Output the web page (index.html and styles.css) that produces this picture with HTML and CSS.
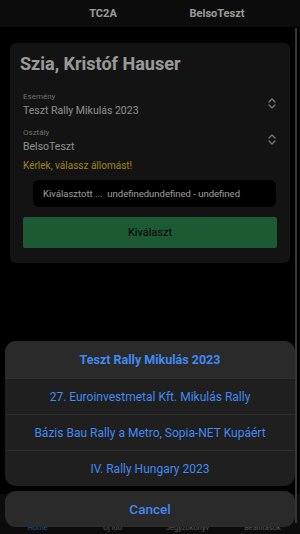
FILE: index.html
```html
<!DOCTYPE html>
<html lang="hu">
<head>
<meta charset="utf-8">
<title>Kiválaszt</title>
<link rel="stylesheet" href="styles.css">
</head>
<body>
<div class="app">
  <header class="topbar">
    <span class="topbar-item">TC2A</span>
    <span class="topbar-item">BelsoTeszt</span>
  </header>
  <main class="content">
    <section class="card">
      <h1 class="greeting">Szia, Kristóf Hauser</h1>
      <div class="field">
        <div class="field-text">
          <span class="field-label">Esemény</span>
          <span class="field-value">Teszt Rally Mikulás 2023</span>
        </div>
        <svg class="chevrons" width="8" height="11" viewBox="0 0 8 11"><path d="M1 4 L4 1 L7 4 M1 7 L4 10 L7 7" fill="none" stroke="currentColor" stroke-width="1.3" stroke-linecap="round" stroke-linejoin="round"/></svg>
      </div>
      <div class="field">
        <div class="field-text">
          <span class="field-label">Osztály</span>
          <span class="field-value">BelsoTeszt</span>
        </div>
        <svg class="chevrons" width="8" height="11" viewBox="0 0 8 11"><path d="M1 4 L4 1 L7 4 M1 7 L4 10 L7 7" fill="none" stroke="currentColor" stroke-width="1.3" stroke-linecap="round" stroke-linejoin="round"/></svg>
      </div>
      <p class="warning">Kérlek, válassz állomást!</p>
      <div class="selected">Kiválasztott ...&nbsp; undefinedundefined - undefined</div>
      <div class="primary" role="button">Kiválaszt</div>
    </section>
  </main>
  <nav class="tabbar">
    <span class="tab tab-active">Home</span>
    <span class="tab">Új idő</span>
    <span class="tab">Jegyzőkönyv</span>
    <span class="tab">Beállítások</span>
  </nav>
  <div class="scroll-indicator"></div>
</div>
<div class="backdrop"></div>
<div class="sheet">
  <div class="sheet-group">
    <div class="sheet-row sheet-title">Teszt Rally Mikulás 2023</div>
    <div class="sheet-row">27. Euroinvestmetal Kft. Mikulás Rally</div>
    <div class="sheet-row">Bázis Bau Rally a Metro, Sopia-NET Kupáért</div>
    <div class="sheet-row">IV. Rally Hungary 2023</div>
  </div>
  <div class="sheet-cancel">Cancel</div>
</div>
</body>
</html>
```
FILE: styles.css
```css
* { box-sizing: border-box; }
html, body {
  margin: 0;
  width: 300px;
  height: 534px;
  overflow: hidden;
  background: #000;
  font-family: Roboto, "Noto Sans", "Liberation Sans", sans-serif;
}
.app {
  position: relative;
  height: 534px;
  display: flex;
  flex-direction: column;
}
.topbar {
  height: 27px;
  background: #151515;
  display: flex;
  align-items: center;
  padding-left: 46px;
}
.topbar-item {
  width: 114px;
  text-align: center;
  color: #fff;
  font-weight: 700;
  font-size: 11px;
}
.content {
  flex: 1;
  padding: 16px 10px 0;
}
.card {
  background: #212121;
  border-radius: 6px;
  padding: 10px 13px 15px;
}
.greeting {
  margin: 0 0 0 -3px;
  font-size: 18px;
  line-height: 22px;
  font-weight: 700;
  color: #fff;
}
.field {
  display: flex;
  align-items: center;
  justify-content: space-between;
  margin-top: 17px;
}
.field + .field { margin-top: 10px; }
.field-text {
  display: flex;
  flex-direction: column;
}
.field-label {
  font-size: 8px;
  line-height: 10px;
  color: #b5b5b5;
}
.field-value {
  margin-top: 2px;
  font-size: 10.5px;
  line-height: 14px;
  color: #e6e6e6;
}
.chevrons {
  color: #c8c8c8;
  margin-right: 1px;
  margin-top: -4px;
}
.warning {
  margin: 5px 0 0;
  font-size: 10px;
  line-height: 14px;
  color: #ffd62e;
}
.selected {
  margin: 7px 1px 0 10px;
  height: 27px;
  background: #000;
  border-radius: 6px;
  display: flex;
  align-items: center;
  padding-left: 10px;
  font-size: 9.5px;
  color: #fff;
  white-space: nowrap;
}
.primary {
  margin-top: 10px;
  height: 31px;
  border-radius: 2px;
  background: #319658;
  color: #000;
  font-size: 11px;
  display: flex;
  align-items: center;
  justify-content: center;
}
.tabbar {
  height: 40px;
  background: #151515;
  display: grid;
  grid-template-columns: repeat(4, 1fr);
  align-items: end;
  padding-bottom: 1px;
}
.tab {
  text-align: center;
  font-size: 7.5px;
  line-height: 10px;
  color: #9a9a9a;
}
.tab-active { color: #4a85f0; }
.scroll-indicator {
  position: absolute;
  right: 3px;
  top: 28px;
  bottom: 11px;
  width: 2px;
  background: #5c5c5c;
}
.backdrop {
  position: absolute;
  inset: 0;
  background: rgba(0, 0, 0, 0.4);
}
.sheet {
  position: absolute;
  left: 5px;
  right: 5px;
  bottom: 7px;
  display: flex;
  flex-direction: column;
  gap: 5px;
}
.sheet-group {
  border-radius: 11px;
  overflow: hidden;
  background: #1f1f1f;
}
.sheet-row {
  height: 36px;
  display: flex;
  align-items: center;
  justify-content: center;
  color: #4189f2;
  font-size: 12px;
  border-top: 1px solid #2e2e2e;
}
.sheet-title {
  height: 37px;
  border-top: 0;
  background: #2a2a2a;
  font-size: 12.5px;
  font-weight: 700;
}
.sheet-cancel {
  height: 36px;
  border-radius: 11px;
  background: #2a2a2a;
  display: flex;
  align-items: center;
  justify-content: center;
  color: #4189f2;
  font-size: 13.5px;
  font-weight: 500;
}
```
